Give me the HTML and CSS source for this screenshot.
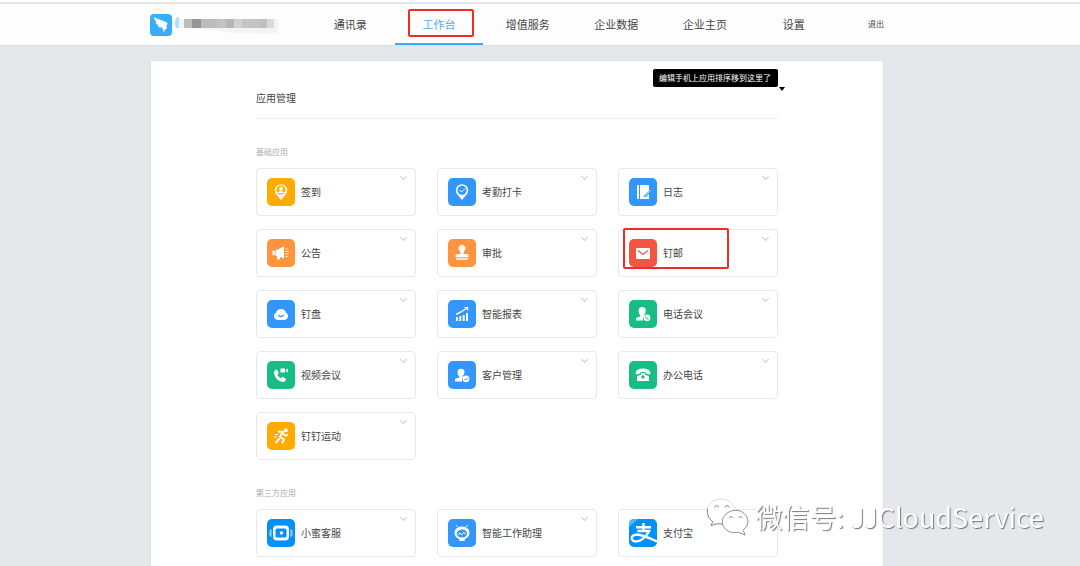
FILE: index.html
```html
<!DOCTYPE html>
<html lang="zh-CN">
<head>
<meta charset="utf-8">
<title>应用管理</title>
<link rel="stylesheet" href="styles.css">
</head>
<body>
<header class="topbar">
  <div class="brand">
    <svg class="logo" viewBox="0 0 22 22"><rect width="22" height="22" rx="4" fill="#38adff"/><path d="M4.200 3C7 5 13 6.500 16.500 8.200C18.200 9 17.500 10.500 16 13H17.500L12.800 19L13.800 15.300H12L12.800 13.500C9.500 14 8 12.800 7.500 11.400L9 11.400C7 10.800 5.800 9.500 5.500 8.100L7 8.400C5 7 4 5.500 4.200 3Z" fill="#fff"/></svg>
    <svg class="masked" viewBox="0 0 112 22" aria-hidden="true"><path d="M3 3Q-1 9 2 14H5V3Z" fill="#b5defa"/><path d="M5 5H104V19L96 20L60 19L30 15L5 14Z" fill="#f4f4f4"/><rect x="10" y="5" width="8" height="9" fill="#bdbdbd"/><rect x="18" y="5" width="9" height="9" fill="#9a9594"/><rect x="27" y="5" width="16" height="9" fill="#bcbcbc"/><rect x="43" y="5" width="9" height="9" fill="#c3c2c4"/><rect x="52" y="5" width="8" height="9" fill="#b9b3b5"/><rect x="60" y="5" width="8" height="9" fill="#cfd2d3"/><rect x="68" y="5" width="17" height="9" fill="#c4c4c5"/><rect x="85" y="5" width="8" height="9" fill="#bcc1c0"/><rect x="93" y="5" width="7" height="9" fill="#d9d9d9"/></svg>
  </div>
  <nav class="tabs">
    <a class="tab" href="#">通讯录</a>
    <a class="tab active" href="#">工作台<span class="mark mark-tab"></span></a>
    <a class="tab" href="#">增值服务</a>
    <a class="tab" href="#">企业数据</a>
    <a class="tab" href="#">企业主页</a>
    <a class="tab" href="#">设置</a>
  </nav>
  <a class="logout" href="#">退出</a>
</header>
<main class="page">
  <div class="panel">
    <div class="panel-head">
      <h1 class="title">应用管理</h1>
      <div class="tip">编辑手机上应用排序移到这里了</div>
    </div>
    <h2 class="group">基础应用</h2>
    <div class="cards">
      <div class="card"><svg class="icon amber" viewBox="0 0 28 28"><path d="M14 22L9 16A6.200 6.200 0 1 1 19 16Z" fill="#fff"/><circle cx="14" cy="12" r="4.500" fill="#ffab00"/><circle cx="14" cy="10.800" r="2" fill="#fff"/><path d="M10.300 15Q14 11 17.700 15Z" fill="#fff"/></svg><span class="name">签到</span><button class="more" aria-label="签到选项"></button></div>
      <div class="card"><svg class="icon blue" viewBox="0 0 28 28"><path d="M14 22L9 16A6.200 6.200 0 1 1 19 16Z" fill="#fff"/><circle cx="14" cy="12.200" r="4.500" fill="#3296fa"/><path d="M11.500 12L13.500 14L17 10.500" class="line"/></svg><span class="name">考勤打卡</span><button class="more" aria-label="考勤打卡选项"></button></div>
      <div class="card"><svg class="icon blue" viewBox="0 0 28 28"><path d="M8 7H10V21H8ZM11 7H20V21H11Z" fill="#fff"/><path d="M21.500 11L15.500 17L15 19.500L17.500 18.500L22 13.500" fill="#3296fa"/><path d="M21 12.500L16.500 17.500" class="line"/></svg><span class="name">日志</span><button class="more" aria-label="日志选项"></button></div>

      <div class="card"><svg class="icon orange" viewBox="0 0 28 28"><path d="M8.500 11.500L17 7.500V19.500L13 18V20.500H10V17H8.500Z" fill="#fff"/><rect x="5.500" y="11.500" width="2.300" height="5" rx="1" fill="#fff"/><path d="M18.500 10H20.500M18.500 12.500H21.500M18.500 15H21.500M18.500 17.500H20.500" class="line"/></svg><span class="name">公告</span><button class="more" aria-label="公告选项"></button></div>
      <div class="card"><svg class="icon orange" viewBox="0 0 28 28"><path d="M12.300 15Q12.800 13 11.400 11.500A3.400 3.400 0 1 1 16.600 11.500Q15.200 13 15.700 15H19Q20.500 15 20.500 17V18.300H7.500V17Q7.500 15 9 15Z" fill="#fff"/><rect x="8" y="19" width="12" height="2" fill="#ffe0c4"/></svg><span class="name">审批</span><button class="more" aria-label="审批选项"></button></div>
      <div class="card"><svg class="icon red" viewBox="0 0 28 28"><rect x="7" y="9" width="14" height="11" rx="1" fill="#fff"/><path d="M9 11.500L14 15.500L19 11.500" fill="none" stroke="#f25643" stroke-width="1.300"/></svg><span class="name">钉邮</span><button class="more" aria-label="钉邮选项"></button><span class="mark mark-card"></span></div>

      <div class="card"><svg class="icon blue" viewBox="0 0 28 28"><path d="M10.500 20A3.900 3.900 0 0 1 9 12.700A5.200 5.200 0 0 1 19 12.700A3.900 3.900 0 0 1 17.500 20Z" fill="#fff"/><path d="M11.300 15Q14 18.200 16.700 15" fill="none" stroke="#3296fa" stroke-width="1.300"/></svg><span class="name">钉盘</span><button class="more" aria-label="钉盘选项"></button></div>
      <div class="card"><svg class="icon blue" viewBox="0 0 28 28"><path d="M9 17V21M12.300 16V21M15.700 15V21M19 13V21" class="line thick"/><path d="M8 14.500L13 12L19 8" class="line" style="stroke-width:1.400"/><path d="M16 7H20.200V11Z" fill="#fff"/></svg><span class="name">智能报表</span><button class="more" aria-label="智能报表选项"></button></div>
      <div class="card"><svg class="icon green" viewBox="0 0 28 28"><path d="M11.500 16Q9.300 13.500 9.500 10.500Q9.700 7 13.200 7Q16.800 7 16.800 10.500Q16.800 13.500 15 15V16.500Q13.500 18 14.200 20.500H7V18.500Q7 17.300 11.500 16.500Z" fill="#fff"/><circle cx="18" cy="17.800" r="3.400" fill="#fff"/><path d="M16.500 16.300Q16.700 19 19.500 19.300" fill="none" stroke="#18bd84" stroke-width="1"/></svg><span class="name">电话会议</span><button class="more" aria-label="电话会议选项"></button></div>

      <div class="card"><svg class="icon green" viewBox="0 0 28 28"><path d="M8 9L10 8.500L11.800 12L10.300 13.500Q11.500 16.500 14 17.200L15.800 15.700L19 18Q18.500 21 16 21Q8 19.500 7 12Q7 10 8 9Z" fill="#fff"/><path d="M13.500 7.500H18V11.500H13.500ZM18.700 9L21 7.500V11.500L18.700 10Z" fill="#fff"/></svg><span class="name">视频会议</span><button class="more" aria-label="视频会议选项"></button></div>
      <div class="card"><svg class="icon blue" viewBox="0 0 28 28"><path d="M11.500 16Q9.300 13.500 9.500 11Q9.700 7.700 13 7.700Q16.500 7.700 16.500 11Q16.500 13.500 14.700 15V16.500Q13.500 18 14.200 20.500H7V18.500Q7 17.300 11.500 16.500Z" fill="#fff"/><circle cx="18" cy="17.800" r="3.400" fill="#fff"/><path d="M16.300 17.800L17.600 19.100L19.800 16.800" fill="none" stroke="#3296fa" stroke-width="1"/></svg><span class="name">客户管理</span><button class="more" aria-label="客户管理选项"></button></div>
      <div class="card"><svg class="icon green" viewBox="0 0 28 28"><path d="M6.500 12.500Q7 7.500 14 7.500Q21 7.500 21.500 12.500L20.500 13.500L17 12.500Q17 10.800 14 10.800Q11 10.800 11 12.500L7.500 13.500Z" fill="#fff"/><path d="M8 15L11.500 14L12.500 12H15.500L16.500 14L20 15V20H8Z" fill="#fff"/><circle cx="14" cy="16" r="1.700" fill="#18bd84"/></svg><span class="name">办公电话</span><button class="more" aria-label="办公电话选项"></button></div>

      <div class="card"><svg class="icon amber" viewBox="0 0 28 28"><circle cx="18.800" cy="8.200" r="2" fill="#fff"/><path d="M11 9.500L16 10L13 15L17 17.500L15 21.500M12.500 16.500L8.500 21M16 11L18 13.500L21 13" fill="none" stroke="#fff" stroke-width="2" stroke-linejoin="round"/><path d="M7.500 12.500H11M6.500 15H10" class="line"/></svg><span class="name">钉钉运动</span><button class="more" aria-label="钉钉运动选项"></button></div>
    </div>
    <h2 class="group">第三方应用</h2>
    <div class="cards">
      <div class="card"><svg class="icon azure" viewBox="0 0 28 28"><rect x="2.500" y="10" width="23" height="8" rx="2.500" fill="#9ad5ff"/><rect x="4.500" y="10" width="19" height="8" fill="#0491f7"/><rect x="6" y="6.500" width="16" height="15" rx="4" fill="#fff"/><rect x="8.500" y="9.500" width="11" height="9" rx="1.500" fill="#0491f7"/><circle cx="14.500" cy="14" r="1.700" fill="#fff"/></svg><span class="name">小蜜客服</span><button class="more" aria-label="小蜜客服选项"></button></div>
      <div class="card"><svg class="icon blue" viewBox="0 0 28 28"><path d="M8 6L10 8M20 6L18 8" class="line"/><path d="M14 7.500Q21.500 8 21.500 14Q21 18.500 17 20L16.500 22H11.500L11 20Q7 18.500 6.500 14Q6.500 8 14 7.500Z" fill="#fff"/><ellipse cx="14" cy="14.500" rx="5.200" ry="4" fill="#3296fa"/><path d="M10 15.500L12 14L13.500 16L15.500 13.500L18 15" fill="none" stroke="#fff" stroke-width="1"/></svg><span class="name">智能工作助理</span><button class="more" aria-label="智能工作助理选项"></button></div>
      <div class="card"><svg class="icon azure" viewBox="0 0 28 28"><path d="M0 8V5Q0 0 5 0H9Z" fill="#55b5fb"/><path d="M7 8.200H22M14.500 4V12M8.500 12H20Q17 18.500 11 21.500Q5 24 3 20.500Q2 16.300 7.500 15.500Q13 15.500 28 22.500" fill="none" stroke="#fff" stroke-width="2.400"/></svg><span class="name">支付宝</span><button class="more" aria-label="支付宝选项"></button></div>
    </div>
  </div>
</main>
<div class="watermark">
  <svg class="wechat" viewBox="0 0 46 40"><path d="M16 1C7 1 1 7 1 14C1 19 4 23 7 25L5 29L12 27Q16 29 20 27C28 26 32 20 31 12Q28 2 16 1Z" fill="#fff" stroke="#ddd"/><path d="M1.500 11Q0 20 7 25L5 29L12 27L18 27.500" fill="none" stroke="#888"/><path d="M31 13C23 13 17 19 17 25C17 33 25 38 34 36L41 39L39 34Q44 30 44 25C44 18 38 13 31 13Z" fill="#fff" stroke="#888"/><g fill="#fff" stroke="#888"><path d="M9 10Q9 8 11 8Q13 8 13 10M20 10Q20 8 22 8Q24 8 24 10M24.500 21Q24.500 19.500 26 19.500Q27.500 19.500 27.500 21M34.500 21Q34.500 19.500 36 19.500Q37.500 19.500 37.500 21"/></g></svg>
  <span>微信号: JJCloudService</span>
</div>
</body>
</html>
```
FILE: styles.css
```css
* { box-sizing: border-box; }
body {
  margin: 0;
  min-height: 100vh;
  display: flex;
  flex-direction: column;
  background: #e5e7eb;
  color: #444;
  font-family: "Noto Sans CJK SC", sans-serif;
  font-size: 10px;
}
a { color: inherit; text-decoration: none; }
h1, h2 { margin: 0; font-weight: 400; }

.topbar {
  display: flex;
  height: 46px;
  padding: 4px 150px 0;
  background: linear-gradient(#fff 2px, #e4e5e8 2px, #e4e5e8 4px, #fdfdfd 4px);
  border-bottom: 1px solid #dedfe3;
}
.brand { display: flex; align-items: center; flex: 0 0 156px; gap: 2px; }
.logo { width: 22px; height: 22px; }
.masked { width: 112px; height: 22px; }
.tabs { display: flex; flex: 0 0 532px; }
.tab {
  position: relative;
  flex: 1;
  border-bottom: 2px solid transparent;
  font-size: 11px;
  line-height: 40px;
  text-align: center;
}
.active { color: #5ba9f3; border-color: #38adff; }
.logout { padding-left: 30px; font-size: 8px; line-height: 40px; white-space: nowrap; }

.mark { position: absolute; border: 2px solid #f22c20; border-radius: 2px; }
.mark-tab { inset: 5px 9px 6px 13px; }
.mark-card { inset: -2px 48px 7px 4px; }

.page { display: flex; flex: 1; padding: 14px 196px 0 150px; }
.panel {
  flex: 1;
  min-width: 0;
  padding: 20px 105px 8px;
  background: #fff;
  border: 1px solid #e0e1e4;
  border-bottom: 0;
  border-radius: 2px 2px 0 0;
}
.panel-head { position: relative; height: 38px; border-bottom: 1px solid #eee; }
.title { font-size: 10px; line-height: 34px; }
.tip {
  position: absolute;
  top: -12px;
  right: 0;
  padding: 0 7px 0 6px;
  border-radius: 2px;
  background: #000;
  color: #fff;
  font-size: 8px;
  line-height: 18px;
}
.tip::after {
  content: "";
  position: absolute;
  top: 18px;
  right: -7px;
  border: 3px solid transparent;
  border-top: 4px solid #000;
  border-bottom: 0;
}

.group { padding: 26px 0 10px; color: #aaa; font-size: 8px; line-height: 13px; }
.cards { display: grid; grid-template-columns: repeat(3, 1fr); gap: 13px 21px; }
.card {
  position: relative;
  display: flex;
  align-items: center;
  gap: 6px;
  height: 48px;
  padding: 0 9px 0 10px;
  border: 1px solid #e8e8e8;
  border-radius: 4px;
}
.icon { flex: none; width: 28px; height: 28px; border-radius: 5px; }
.name { font-size: 10px; line-height: 16px; }
.line { fill: none; stroke: #fff; stroke-width: 1; }
.thick { stroke-width: 2; }
.amber { background: #ffab00; }
.blue { background: #3296fa; }
.orange { background: #ff943e; }
.red { background: #f25643; }
.green { background: #18bd84; }
.azure { background: #0491f7; }
.more {
  align-self: flex-start;
  width: 5px;
  height: 5px;
  margin: 5px 0 0 auto;
  padding: 0;
  border: solid #ccc;
  border-width: 0 1px 1px 0;
  background: none;
  transform: rotate(45deg);
}

.watermark {
  position: fixed;
  right: 36px;
  bottom: 29px;
  display: flex;
  align-items: center;
  gap: 6px;
  color: #fff;
  font-size: 27px;
  line-height: 40px;
  text-shadow: 1px 1px 1px #777;
  white-space: nowrap;
}
.wechat { width: 44px; height: 38px; }
```
